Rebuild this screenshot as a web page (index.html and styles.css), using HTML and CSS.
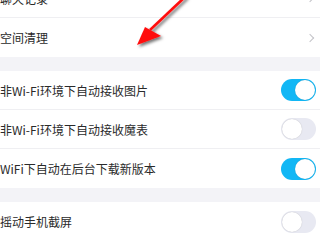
FILE: index.html
```html
<!DOCTYPE html>
<html lang="zh-CN">
<head>
  <meta charset="UTF-8" />
  <meta name="viewport" content="width=device-width, initial-scale=1.0" />
  <title>设置</title>
  <link rel="stylesheet" href="styles.css">
</head>
<body>

  <div class="settings">
    <div class="group">
      <div class="row"><span>聊天记录</span><span class="chevron"></span></div>
      <div class="row"><span>空间清理</span><span class="chevron"></span></div>
    </div>

    <div class="group">
      <div class="row"><span>非Wi-Fi环境下自动接收图片</span><span class="switch on"></span></div>
      <div class="row"><span>非Wi-Fi环境下自动接收魔表</span><span class="switch"></span></div>
      <div class="row"><span>WiFi下自动在后台下载新版本</span><span class="switch on"></span></div>
    </div>

    <div class="group">
      <div class="row"><span>摇动手机截屏</span><span class="switch"></span></div>
    </div>
  </div>

  <svg class="arrow" width="80" height="60" viewBox="0 0 80 60">
    <defs>
      <filter id="shade" x="-30%" y="-30%" width="160%" height="160%">
        <feDropShadow dx="2" dy="2" stdDeviation="1.5" flood-color="#000" flood-opacity="0.55" />
      </filter>
    </defs>
    <g filter="url(#shade)">
      <line x1="56" y1="-4" x2="20" y2="30" stroke="#ff1010" stroke-width="2.6" />
      <polygon points="7,45 15,27 31,36" fill="#ff1010" />
    </g>
  </svg>

</body>
</html>
```

FILE: styles.css
```css
body {
  margin: 0;
  font-family: "Noto Sans CJK SC", "Liberation Sans", sans-serif;
  background: #f3f3f7;
  color: #2a2a2a;
  overflow: hidden;
}

.settings {
  margin-top: -21px;
  display: flex;
  flex-direction: column;
  gap: 14px;
}

.group {
  background: #fff;
}

.row {
  height: 38px;
  display: flex;
  align-items: center;
  justify-content: space-between;
  padding: 0 4px 0 0;
  font-size: 12px;
  border-bottom: 1px solid #efeff2;
}

.row:last-child {
  height: 39px;
  border-bottom: none;
}

.chevron {
  width: 5px;
  height: 5px;
  margin-right: 3px;
  border-top: 1.2px solid #c3c3c8;
  border-right: 1.2px solid #c3c3c8;
  transform: rotate(45deg);
}

.switch {
  position: relative;
  width: 35px;
  height: 22px;
  border-radius: 11px;
  background: #e8e9f2;
  box-sizing: border-box;
}

.switch::after {
  content: "";
  position: absolute;
  top: 1px;
  left: 1px;
  width: 20px;
  height: 20px;
  border-radius: 50%;
  background: #fff;
  box-shadow: 0 0 1px rgba(0, 0, 0, 0.25);
}

.switch.on {
  background: #12b7f5;
}

.switch.on::after {
  left: 14px;
}

.arrow {
  position: absolute;
  top: 0;
  left: 130px;
}
```
